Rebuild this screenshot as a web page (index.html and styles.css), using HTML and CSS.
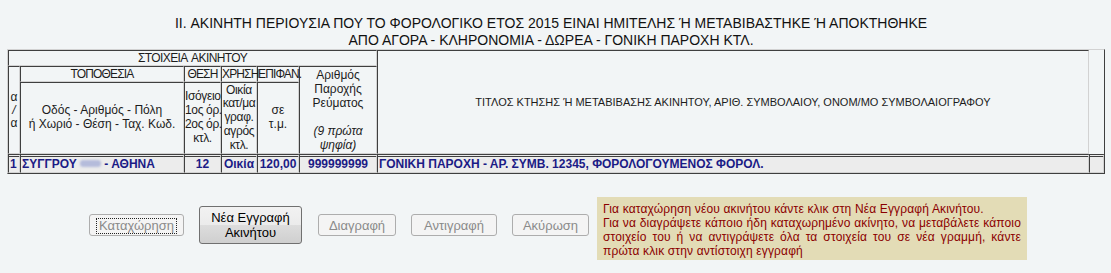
FILE: index.html
```html
<!DOCTYPE html>
<html lang="el">
<head>
<meta charset="utf-8">
<title>Ακίνητη περιουσία</title>
<link rel="stylesheet" href="styles.css">
</head>
<body>
<div class="page">
  <div class="heading">II. ΑΚΙΝΗΤΗ ΠΕΡΙΟΥΣΙΑ ΠΟΥ ΤΟ ΦΟΡΟΛΟΓΙΚΟ ΕΤΟΣ 2015 ΕΙΝΑΙ ΗΜΙΤΕΛΗΣ Ή ΜΕΤΑΒΙΒΑΣΤΗΚΕ Ή ΑΠΟΚΤΗΘΗΚΕ<br>ΑΠΟ ΑΓΟΡΑ - ΚΛΗΡΟΝΟΜΙΑ - ΔΩΡΕΑ - ΓΟΝΙΚΗ ΠΑΡΟΧΗ ΚΤΛ.</div>
  <table class="grid">
    <colgroup>
      <col class="c-aa"><col class="c-loc"><col class="c-pos"><col class="c-use"><col class="c-area"><col class="c-meter"><col class="c-title"><col class="c-end">
    </colgroup>
    <tr class="r1">
      <td colspan="6" class="caps wide">ΣΤΟΙΧΕΙΑ ΑΚΙΝΗΤΟΥ</td>
      <td rowspan="3" class="title-cell">ΤΙΤΛΟΣ ΚΤΗΣΗΣ Ή ΜΕΤΑΒΙΒΑΣΗΣ ΑΚΙΝΗΤΟΥ, ΑΡΙΘ. ΣΥΜΒΟΛΑΙΟΥ, ΟΝΟΜ/ΜΟ ΣΥΜΒΟΛΑΙΟΓΡΑΦΟΥ</td>
      <td rowspan="3" class="blank"></td>
    </tr>
    <tr class="r2">
      <td rowspan="2" class="aa">α<br><i>/</i><br>α</td>
      <td class="caps">ΤΟΠΟΘΕΣΙΑ</td>
      <td class="caps">ΘΕΣΗ</td>
      <td class="caps">ΧΡΗΣΗ</td>
      <td class="caps">ΕΠΙΦΑΝ.</td>
      <td rowspan="2">Αριθμός<br>Παροχής<br>Ρεύματος<br><br><i>(9 πρώτα<br>ψηφία)</i></td>
    </tr>
    <tr class="r3">
      <td>Οδός - Αριθμός - Πόλη<br>ή Χωριό - Θέση - Ταχ. Κωδ.</td>
      <td class="tight">Ισόγειο<br>1ος όρ.<br>2ος όρ.<br>κτλ.</td>
      <td class="tight">Οικία<br>κατ/μα<br>γραφ.<br>αγρός<br>κτλ.</td>
      <td>σε<br>τ.μ.</td>
    </tr>
    <tr class="data">
      <td class="left">1</td>
      <td class="left">ΣΥΓΓΡΟΥ <span class="blur"></span> - ΑΘΗΝΑ</td>
      <td>12</td>
      <td>Οικία</td>
      <td>120,00</td>
      <td>999999999</td>
      <td class="left">ΓΟΝΙΚΗ ΠΑΡΟΧΗ - ΑΡ. ΣΥΜΒ. 12345, ΦΟΡΟΛΟΓΟΥΜΕΝΟΣ ΦΟΡΟΛ.</td>
      <td></td>
    </tr>
  </table>
  <div class="actions">
    <div class="buttons">
      <button class="btn w-save" disabled><span class="focus">Καταχώρηση</span></button>
      <button class="btn btn-main">Νέα Εγγραφή<br>Ακινήτου</button>
      <button class="btn w-del" disabled>Διαγραφή</button>
      <button class="btn w-copy" disabled>Αντιγραφή</button>
      <button class="btn w-cancel" disabled>Ακύρωση</button>
    </div>
    <div class="note">
      <p class="first">Για καταχώρηση νέου ακινήτου κάντε κλικ στη Νέα Εγγραφή Ακινήτου.</p>
      <p>Για να διαγράψετε κάποιο ήδη καταχωρημένο ακίνητο, να μεταβάλετε κάποιο στοιχείο του ή να αντιγράψετε όλα τα στοιχεία του σε νέα γραμμή, κάντε πρώτα κλικ στην αντίστοιχη εγγραφή</p>
    </div>
  </div>
</div>
</body>
</html>
```
FILE: styles.css
```css
html, body {
  margin: 0;
  padding: 0;
  background: #f2f5f6;
}
body {
  font-family: "Liberation Sans", Arial, sans-serif;
  color: #1c1c1c;
}
.page {
  padding: 15px 6px 0 7px;
}
.heading {
  font-size: 14px;
  line-height: 17px;
  text-align: center;
  padding-right: 10px;
  color: #111;
}
.grid {
  table-layout: fixed;
  width: 1098px;
  border-collapse: separate;
  border-spacing: 0;
  border: 1px solid;
  border-color: #d2d2d2 #3f3f3f #3f3f3f #d2d2d2;
  font-size: 12px;
}
.c-aa { width: 12px; }
.c-loc { width: 164px; }
.c-pos { width: 37px; }
.c-use { width: 36px; }
.c-area { width: 42px; }
.c-meter { width: 78px; }
.c-title { width: 712px; }
.c-end { width: 15px; }
.grid td {
  box-sizing: border-box;
  border: 1px solid;
  border-color: #3f3f3f #d2d2d2 #d2d2d2 #3f3f3f;
  padding: 0;
  text-align: center;
  vertical-align: middle;
  line-height: 13.8px;
  white-space: nowrap;
}
.grid td.caps { letter-spacing: -0.85px; }
.grid td.caps.wide { letter-spacing: -0.6px; word-spacing: 2px; }
.grid td.tight { letter-spacing: -0.35px; }
.grid .r1 td, .grid .r2 td { height: 16px; line-height: 14px; }
.grid .r3 td { height: 72px; }
.grid td.blank { border: none; }
.grid td.title-cell {
  font-size: 11px;
  letter-spacing: 0;
}
.grid td.aa { line-height: 13px; }
.grid .data td {
  height: 19px;
  border-top: 3px double #3f3f3f;
  background: #ececec;
  color: #1b1b86;
  font-weight: bold;
  line-height: 15px;
}
.grid .data td.left { text-align: left; padding-left: 1px; }
.blur {
  display: inline-block;
  width: 21px;
  height: 7px;
  vertical-align: 1px;
  background: #b5bcdb;
  border-radius: 3px;
  filter: blur(1px);
}
.actions {
  display: flex;
  align-items: flex-start;
  margin-top: 23px;
  padding-left: 82px;
}
.buttons {
  display: flex;
  align-items: center;
  gap: 15px;
  height: 38px;
  margin-top: 9px;
}
.btn {
  box-sizing: border-box;
  height: 22px;
  padding: 0;
  font-family: "Liberation Sans", Arial, sans-serif;
  font-size: 13px;
  color: #8a8a8a;
  background: #f4f4f4;
  border: 1px solid #adadad;
  border-radius: 3px;
}
.w-save { width: 95px; }
.w-del { width: 78px; margin-left: 1px; }
.w-copy { width: 86px; }
.w-cancel { width: 77px; }
.focus {
  display: inline-block;
  outline: 1px dotted #222;
  outline-offset: 0;
  padding: 0 2px;
  line-height: 14px;
}
.btn-main {
  width: 103px;
  height: 38px;
  color: #000;
  line-height: 15px;
  border: 1px solid #707070;
  background: linear-gradient(#f2f2f2 0%, #ebebeb 50%, #dddddd 50%, #cfcfcf 100%);
}
.note {
  box-sizing: border-box;
  width: 430px;
  height: 63px;
  margin-left: 8px;
  padding: 5px 6px 0 6px;
  background: #e3dcb6;
  color: #8b0000;
  font-size: 12px;
  line-height: 14px;
  letter-spacing: 0.15px;
}
.note p {
  margin: 0;
  text-align: justify;
}
.note p.first { text-align: left; }
```
